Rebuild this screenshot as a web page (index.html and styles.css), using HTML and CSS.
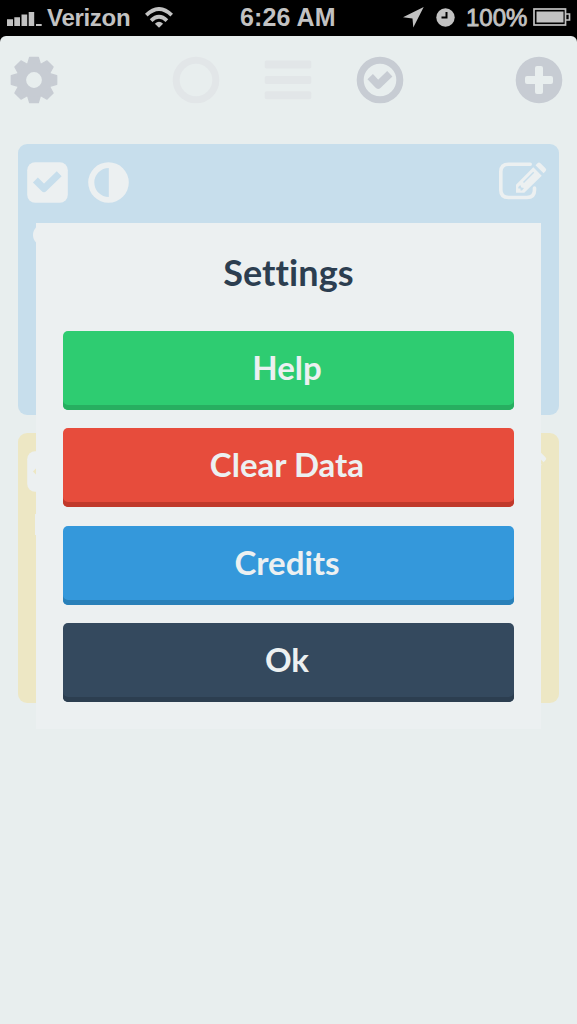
FILE: index.html
```html
<!DOCTYPE html>
<html lang="en">
<head>
<meta charset="utf-8">
<title>Settings</title>
<link rel="stylesheet" href="styles.css">
</head>
<body>
<svg class="defs" width="0" height="0">
  <defs>
    <path id="tooth" d="M-6.6-15 L-4.3-22.7 H4.3 L6.6-15Z"/>
    <symbol id="check-square" viewBox="0 0 41 41">
      <rect x=".2" y=".2" width="40.6" height="40.6" rx="8"/>
      <path class="cut" d="M8.400 18 L17 26.500 L32.200 11.700"/>
    </symbol>
    <symbol id="contrast" viewBox="0 0 41 41">
      <path fill-rule="evenodd" d="M20.5.2a20.3 20.3 0 1 1 0 40.6a20.3 20.3 0 0 1 0-40.6Z M20.8 6a14.5 14.5 0 0 0 0 29Z"/>
    </symbol>
    <symbol id="edit" viewBox="0 0 49 40">
      <path class="frame" d="M32.200 2.200H10.500Q2.800 2.200 2.800 9.800V28Q2.800 35.500 10.500 35.500H29Q36.500 35.500 36.500 28V26"/>
      <path class="gap" d="M35.300 5.300L43.700 13.700L26.300 30.700H18V22.700Z"/>
      <path fill-rule="evenodd" d="M35.300 5.300L43.700 13.700L26.300 30.700H18V22.700Z M20.300 25L22.300 23L23.300 25.500L26 26L24 28.500H22.500V26.500H20.300Z M25 20L26 21L36.200 10.800L35.200 9.800Z"/>
      <path d="M37.500 3.200L39.500 1.200Q41 0 42.500 1.300L47.500 6.200Q49 7.700 47.500 9.200L45.600 11.200Z"/>
    </symbol>
  </defs>
</svg>
<header class="status">
  <svg class="signal" width="35" height="17" viewBox="0 0 35 17"><path d="M0 9.200h6V16H0Z M7.300 7.200h5.700V16H7.300Z M14.500 4.500h5.700V16H14.500Z M21.700 2h5.500v14H21.700Z M29 14h5.700v2H29Z"/></svg>
  <span class="carrier">Verizon</span>
  <svg class="wifi" width="28" height="21" viewBox="0 0 28 21"><path class="arc" d="M1.300 8.200Q14-4.200 26.700 8.200 M6.100 13.700Q14 6 21.900 13.700"/><path d="M14 20.800L9.900 16.800Q14 12.700 18.100 16.800Z"/></svg>
  <span class="time">6:26 AM</span>
  <svg class="location" width="21" height="21" viewBox="0 0 21 21"><path d="M20.700 0L10.300 20.500L9.500 11.500L0 10.300Z"/></svg>
  <svg class="clock" width="19" height="19" viewBox="0 0 19 19"><circle cx="9.500" cy="9.500" r="9.200"/><path class="hands" d="M10.500 4V9.500H5.500"/></svg>
  <span class="charge">100%</span>
  <svg class="battery" width="38" height="18" viewBox="0 0 38 18"><rect class="case" x="1" y="1" width="31.500" height="16"/><path d="M3.500 3.500H30.500V14.500H3.500Z"/><path class="case" d="M33 6H36.500V12H33"/></svg>
</header>
<main class="app">
  <nav class="toolbar">
    <svg class="gear" width="48" height="48" viewBox="-24 -24 48 48">
      <g class="teeth"><use href="#tooth"/><use href="#tooth" transform="rotate(45)"/><use href="#tooth" transform="rotate(90)"/><use href="#tooth" transform="rotate(135)"/><use href="#tooth" transform="rotate(180)"/><use href="#tooth" transform="rotate(225)"/><use href="#tooth" transform="rotate(270)"/><use href="#tooth" transform="rotate(315)"/></g>
      <circle class="ring" r="12.400"/>
    </svg>
    <svg class="faint" width="48" height="48" viewBox="-24 -24 48 48"><circle class="outline" r="19.800"/></svg>
    <svg class="faint" width="48" height="48" viewBox="-24 -24 48 48"><rect x="-23.300" y="-19.400" width="46.600" height="8" rx="2"/><rect x="-23.300" y="-4" width="46.600" height="8" rx="2"/><rect x="-23.300" y="11.300" width="46.600" height="8" rx="2"/></svg>
    <svg width="48" height="48" viewBox="-24 -24 48 48"><circle class="outline" r="19.800"/><path class="tick" d="M-9.800-3.400L-1.900 5L9.800-6.300"/></svg>
    <svg class="add" width="48" height="48" viewBox="-24 -24 48 48"><circle r="23.300"/><g class="plus"><rect x="-14" y="-4" width="28" height="8" rx="2"/><rect x="-4" y="-14" width="8" height="28" rx="2"/></g></svg>
  </nav>
  <section class="card blue">
    <div class="card-tools">
      <svg width="41" height="41"><use href="#check-square"/></svg>
      <svg width="41" height="41"><use href="#contrast"/></svg>
      <svg class="edit" width="49" height="40"><use href="#edit"/></svg>
    </div>
    <div class="bullet"></div>
  </section>
  <section class="card yellow">
    <div class="card-tools">
      <svg width="41" height="41"><use href="#check-square"/></svg>
      <svg width="41" height="41"><use href="#contrast"/></svg>
      <svg class="edit" width="49" height="40"><use href="#edit"/></svg>
    </div>
    <div class="mark"></div>
  </section>
</main>
<div class="modal">
  <h1 class="title">Settings</h1>
  <button class="btn green">Help</button>
  <button class="btn red">Clear Data</button>
  <button class="btn sky">Credits</button>
  <button class="btn navy">Ok</button>
</div>
</body>
</html>
```
FILE: styles.css
```css
* { box-sizing: border-box; }
body {
  margin: 0;
  height: 1024px;
  background: #000;
  font-family: Lato, sans-serif;
  overflow: hidden;
}
svg { display: block; flex: none; }
.defs { position: absolute; }

.status {
  display: flex;
  height: 36px;
  padding-left: 7px;
  color: #c2c2c2;
  fill: #c2c2c2;
  font: bold 24px/36px "Liberation Sans", Arial, sans-serif;
  white-space: nowrap;
}
.signal { margin: 10px 5px 0 0; }
.carrier { width: 98px; letter-spacing: -.3px; }
.wifi { margin: 7px 67px 0 0; }
.arc { fill: none; stroke: #c2c2c2; stroke-width: 3.8; }
.time { width: 163px; font-size: 25px; line-height: 35px; letter-spacing: .1px; }
.location { margin: 7px 12px 0 0; }
.clock { margin: 8px 11px 0 0; }
.hands { fill: none; stroke: #000; stroke-width: 2; }
.charge { width: 67px; font-weight: normal; -webkit-text-stroke: .8px #c2c2c2; }
.battery { margin-top: 8px; }
.case { fill: none; stroke: #c2c2c2; stroke-width: 1.7; }

.app {
  height: 988px;
  background: #e8eeee;
  border-radius: 6px 6px 0 0;
}
.toolbar {
  display: flex;
  gap: 44px;
  height: 108px;
  padding: 20px 14px 0 10px;
  fill: #c7ccd3;
  stroke: #c7ccd3;
  stroke-width: 0;
}
.gear { margin-right: 70px; }
.add { margin-left: auto; }
.teeth { stroke-width: 1.3; stroke-linejoin: round; }
.ring { fill: none; stroke-width: 9; }
.outline { fill: none; stroke-width: 7; }
.tick { fill: none; stroke-width: 7.5; stroke-linejoin: round; }
.plus { fill: #e8eeee; }
.faint { fill: #e2e6e8; stroke: #e2e6e8; }

.card {
  height: 270.5px;
  margin: 0 18px 18px;
  padding: 18px 12px 0 9px;
  border-radius: 9px;
}
.blue { background: #c7deec; color: #c7deec; }
.yellow { background: #ede7c4; color: #ede7c4; }
.card-tools { display: flex; gap: 20px; fill: #ecf0f1; }
.edit { margin-left: auto; }
.cut { fill: none; stroke: currentColor; stroke-width: 7; stroke-linejoin: round; }
.frame { fill: none; stroke: #ecf0f1; stroke-width: 3.6; stroke-linecap: round; }
.gap { fill: currentColor; stroke: currentColor; stroke-width: 3; }
.bullet {
  width: 22px;
  height: 22px;
  margin: 21px 0 0 6px;
  border-radius: 50%;
  background: #ecf0f1;
}
.mark { width: 5px; height: 21px; margin: 22px 0 0 8px; background: #ecf0f1; }

.modal {
  position: absolute;
  left: 36px;
  top: 222.5px;
  width: 505px;
  height: 506.5px;
  padding: 0 27px;
  display: flex;
  flex-direction: column;
  gap: 18.4px;
  background: #ecf0f1;
}
.title {
  height: 90px;
  margin: 0;
  color: #2c3e50;
  font-size: 36px;
  line-height: 99px;
  letter-spacing: .1px;
  font-weight: 700;
  text-align: center;
  font-variant-ligatures: none;
}
.btn {
  height: 79px;
  padding: 0 3px 7px 0;
  border: 0;
  border-radius: 5px;
  color: #ecf0f1;
  font: 700 33px/72px Lato, sans-serif;
}
.green { background: #2ecc71; box-shadow: inset 0 -5px #27ae60; }
.red { background: #e74c3c; box-shadow: inset 0 -5px #c0392b; }
.sky { background: #3498db; box-shadow: inset 0 -5px #2980b9; }
.navy { background: #34495e; box-shadow: inset 0 -5px #2c3e50; }
```
